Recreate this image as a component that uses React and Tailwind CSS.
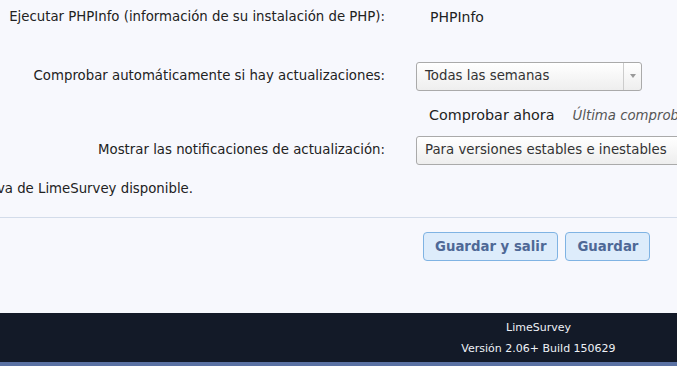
import React from 'react';

export default function App() {
    return (
        <div className="w-[677px] h-[366px] overflow-hidden bg-[#f7f8fd] text-[13.3px] text-[#222]" style={{ fontFamily: '"DejaVu Sans", Verdana, sans-serif' }}>
            <div className="w-[1077px]">
                {/* Settings rows */}
                <div className="flex items-center h-[34px]">
                    <div className="w-[385px] shrink-0 text-right whitespace-nowrap">Ejecutar PHPInfo (información de su instalación de PHP):</div>
                    <div className="ml-[45px] text-[14px] text-[#222]">PHPInfo</div>
                </div>

                <div className="flex items-center mt-[27px] h-[30px]">
                    <div className="w-[385px] shrink-0 text-right whitespace-nowrap">Comprobar automáticamente si hay actualizaciones:</div>
                    <div className="ml-[31px] w-[226px] h-[29px] flex items-stretch rounded-[3px] border border-[#aaaaaa] bg-gradient-to-b from-white to-[#eeeeee]">
                        <div className="flex-1 flex items-center pl-[8px] text-[#333]">Todas las semanas</div>
                        <div className="w-[18px] border-l border-[#cccccc] flex items-center justify-center">
                            <div className="w-0 h-0 border-l-[3px] border-r-[3px] border-t-[4px] border-l-transparent border-r-transparent border-t-[#999999]" />
                        </div>
                    </div>
                </div>

                <div className="flex items-center h-[44px] pt-[5px]">
                    <div className="ml-[429px] text-[14.3px] text-[#222]">Comprobar ahora</div>
                    <div className="ml-[18px] italic text-[#555] whitespace-nowrap">Última comprobación: 2015-07-01</div>
                </div>

                <div className="flex items-center h-[30px]">
                    <div className="w-[385px] shrink-0 text-right whitespace-nowrap">Mostrar las notificaciones de actualización:</div>
                    <div className="ml-[31px] w-[330px] h-[29px] flex items-center rounded-[3px] border border-[#aaaaaa] bg-gradient-to-b from-white to-[#eeeeee] pl-[8px] text-[#333] whitespace-nowrap">
                        Para versiones estables e inestables
                    </div>
                </div>

                <div className="flex items-center h-[48px]">
                    <div className="w-[193px] flex justify-end">
                        <span className="shrink-0 whitespace-nowrap">Hay una versión nueva de LimeSurvey disponible.</span>
                    </div>
                </div>

                {/* Divider */}
                <div className="h-px bg-[#d3dcea] mt-[4px]" />

                {/* Buttons */}
                <div className="flex gap-[7px] pl-[423px] pt-[14px] h-[95px]">
                    <button className="h-[29px] px-[11px] rounded-[4px] border border-[#7fb3e3] bg-[#ddecfb] text-[#4e6896] font-bold text-[13.3px]">Guardar y salir</button>
                    <button className="h-[29px] px-[11px] rounded-[4px] border border-[#7fb3e3] bg-[#ddecfb] text-[#4e6896] font-bold text-[13.3px]">Guardar</button>
                </div>

                {/* Footer */}
                <div className="bg-[#131a28] h-[49px] flex flex-col items-center justify-center text-[11px] text-[#eef1f6] leading-[21px]">
                    <div>LimeSurvey</div>
                    <div>Versión 2.06+ Build 150629</div>
                </div>
                <div className="h-[10px] bg-[#5a71a3]" />
            </div>
        </div>
    );
}
